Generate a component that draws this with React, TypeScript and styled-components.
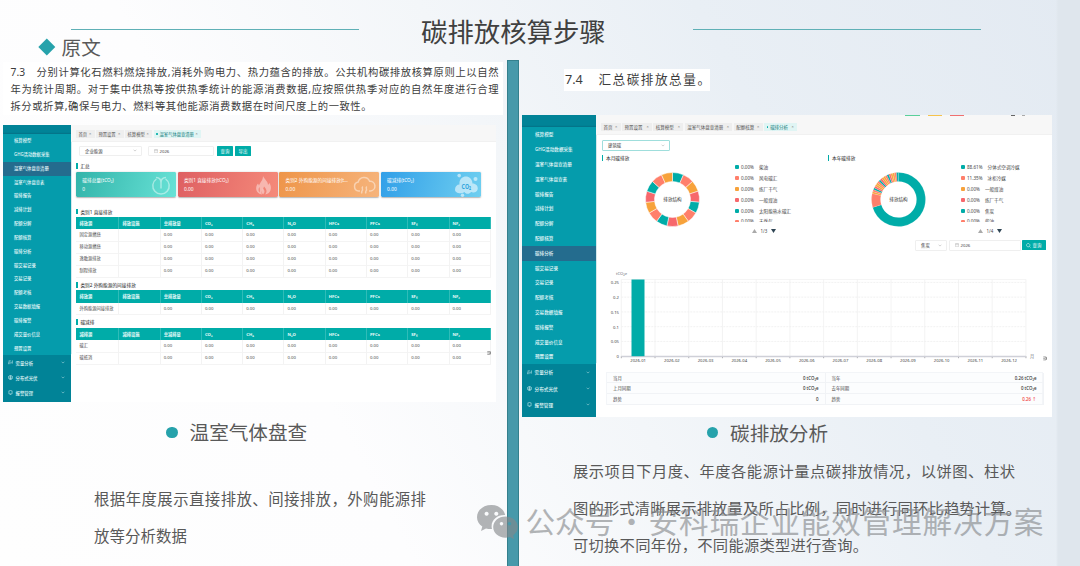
import React from 'react';
import styled, { createGlobalStyle } from 'styled-components';

const Global = createGlobalStyle`
  * { box-sizing: border-box; }
  html, body { margin: 0; padding: 0; }
  body {
    width: 1080px; height: 566px; overflow: hidden;
    font-family: "Noto Sans CJK SC", "Noto Sans", sans-serif;
    color: #595959;
  }
`;

const TEAL = '#00aca8';
const CORAL = '#ff7f6b';
const ORANGE = '#f7a23b';
const RED = '#f7686c';
const UI_FONT = '"Noto Sans", "Noto Sans CJK SC", sans-serif';

/* ---------- slide ---------- */
const Slide = styled.div`
  position: relative;
  width: 1080px; height: 566px; overflow: hidden;
  display: flex; flex-direction: column;
  background:
    linear-gradient(90deg, transparent 1056px, #dfe6ed 1058px),
    linear-gradient(62deg, #fefefe 0%, #fdfdfe 30%, #f3f6f9 52%, #e9eff5 72%, #e3eaf2 100%);
`;
const Header = styled.header`
  display: flex; align-items: flex-start; height: 38px; flex: none;
  padding-left: 71px;
`;
const Rule = styled.div`
  width: 288px; height: 1px; margin-top: 29px; background: #5fb0b6;
`;
const Title = styled.h1`
  margin: 16px 87px 0 62px; width: 185px; height: 30px; line-height: 30px;
  font-size: 26.4px; font-weight: 400; color: #404040; white-space: nowrap;
`;
const Body = styled.div`
  display: grid; grid-template-columns: 507px 12px 537px; flex: 1; min-height: 0;
`;
const Column = styled.section`
  display: flex; flex-direction: column; align-items: flex-start; min-width: 0;
`;
const Divider = styled.div`
  margin-top: 22px; background: #4799aa;
  border: 1px solid #34808d; border-bottom: 0;
`;
const SourceHead = styled.div`
  display: flex; align-items: center; height: 18px; margin-left: 41px; gap: 9px;
  font-size: 19.6px; line-height: 18px;
`;
const Diamond = styled.i`
  width: 11.6px; height: 11.6px; background: #26a2ab; transform: rotate(45deg);
`;
const Quote = styled.div<{ $w: number; $h: number; $m: string; $p: string }>`
  width: ${p => p.$w}px; height: ${p => p.$h}px; margin: ${p => p.$m}; padding: ${p => p.$p};
  background: #fff; color: #3c3c3c; font-family: ${UI_FONT};
`;
const Line = styled.div<{ $w: number; $size: number; $lh: number }>`
  width: ${p => p.$w}px; font-size: ${p => p.$size}px; line-height: ${p => p.$lh}px;
  height: ${p => p.$lh}px; white-space: nowrap; text-align: justify; text-align-last: justify;
`;
const Caption = styled.h2<{ $m: string; $gap: number }>`
  display: flex; align-items: center; gap: ${p => p.$gap}px; margin: ${p => p.$m};
  height: 24px; font-size: 19.6px; font-weight: 400; line-height: 24px; white-space: nowrap;
  color: #595959;
`;
const Dot = styled.i`
  width: 11.6px; height: 11.6px; border-radius: 50%; background: #26a2ab;
`;
const Paragraph = styled.div<{ $m: string }>`
  margin: ${p => p.$m}; color: #595959;
`;
const Watermark = styled.div`
  position: absolute; left: 476px; top: 501px; height: 42px;
  display: flex; align-items: center; opacity: .62;
  color: #85888b;
`;
const WatermarkText = styled.div`
  display: flex; margin-left: 6.5px; font-size: 29.6px; line-height: 40px; height: 42px; white-space: nowrap;
`;
const WatermarkName = styled.span` width: 89px; `;
const WatermarkDot = styled.span` width: 34px; text-align: center; `;
const WatermarkOrg = styled.span` letter-spacing: .85px; `;

/* ---------- application window ---------- */
const AppWindow = styled.div<{ $w: number; $h: number; $m: string }>`
  display: flex; width: ${p => p.$w}px; height: ${p => p.$h}px; margin: ${p => p.$m};
  background: #fff; overflow: hidden; flex: none; font-family: ${UI_FONT};
`;
const Side = styled.nav<{ $w: number; $top: number; $size: number }>`
  width: ${p => p.$w}px; flex: none; background: #018397; color: #e4f7f8;
  font-size: ${p => p.$size}px; font-weight: 500; white-space: nowrap;
  padding-top: ${p => p.$top}px;
`;
const SubMenu = styled.div`
  background: #059cac; box-shadow: 0 -1px 1px #04758a;
`;
const SubItem = styled.div<{ $h: number; $pad: number; $on?: boolean }>`
  height: ${p => p.$h}px; line-height: ${p => p.$h}px; padding-left: ${p => p.$pad}px;
  background: ${p => (p.$on ? '#246c8e' : 'transparent')};
`;
const MainItem = styled.div<{ $h: number }>`
  display: flex; align-items: center; height: ${p => p.$h}px; padding: 0 6px 0 5px;
`;
const MainLabel = styled.span` flex: 1; margin-left: 2.6px; `;

const Content = styled.div` flex: 1; min-width: 0; display: flex; flex-direction: column; `;
const Tabs = styled.div<{ $h: number; $pt: number; $pl: number }>`
  display: flex; align-items: flex-start; height: ${p => p.$h}px; flex: none;
  padding: ${p => p.$pt}px 0 0 ${p => p.$pl}px; background: #f7f7f7;
  border-bottom: 1px solid #f1f1f1;
`;
const Tab = styled.div<{ $w: number; $on?: boolean; $size: number }>`
  display: flex; align-items: center; justify-content: space-between;
  width: ${p => p.$w}px; height: 8.4px; margin-right: 1.4px; padding: 0 3.4px 0 2.4px;
  font-size: ${p => p.$size}px; line-height: 8px; white-space: nowrap;
  background: ${p => (p.$on ? '#e0f5f4' : '#eeeeee')};
  color: ${p => (p.$on ? '#157c7c' : '#555')};
`;
const TabLabel = styled.span`
  display: flex; align-items: center; gap: 2px;
  &::before { content: ''; width: 1.6px; height: 1.6px; border-radius: 50%; background: ${TEAL}; }
`;
const Close = styled.span` font-size: 4px; color: #777; `;
const Filters = styled.div<{ $m: string }>`
  display: flex; align-items: center; height: 10.5px; margin: ${p => p.$m}; flex: none;
`;
const Field = styled.div<{ $w: number; $ml?: number; $c?: string }>`
  display: flex; align-items: center; justify-content: space-between;
  width: ${p => p.$w}px; height: 10.5px; margin-left: ${p => p.$ml ?? 0}px; padding: 0 4px 0 5px;
  border: 1px solid ${p => p.$c ?? '#efefef'}; border-radius: 1px; background: #fff;
  font-size: 4.4px; line-height: 8px; color: #444;
`;
const DateValue = styled.span` flex: 1; margin-left: 2px; font-size: 4.3px; `;
const Button = styled.div<{ $w: number; $ml: number }>`
  display: flex; align-items: center; justify-content: center; gap: 2px;
  width: ${p => p.$w}px; height: 10px; margin-left: ${p => p.$ml}px; border-radius: .6px;
  background: ${TEAL}; color: #fff; font-size: 4.4px; line-height: 10px;
`;
const Section = styled.div<{ $m: string }>`
  display: flex; align-items: center; gap: 2.6px; height: 6px; margin: ${p => p.$m}; flex: none;
  font-size: 4.7px; line-height: 6px; color: #222; white-space: nowrap;
  &::before { content: ''; width: 1.4px; height: 5.8px; background: ${TEAL}; }
`;
const Cards = styled.div`
  display: flex; gap: 1.6px; margin: 2.6px 0 0 5.3px; height: 25px; flex: none;
`;
const Card = styled.div<{ $from: string; $to: string }>`
  display: flex; justify-content: space-between; width: 100px; height: 25px;
  padding: 4px 3px 0 6px; border-radius: 1.4px; color: #fff;
  background: linear-gradient(105deg, ${p => p.$from}, ${p => p.$to});
  box-shadow: 0 .6px 1.4px rgba(90, 90, 90, .45);
  font-size: 4.7px; line-height: 8px; white-space: nowrap;
`;
const CardValue = styled.div` margin-top: 1.6px; font-size: 4.9px; `;
const CardIcon = styled.svg` width: 24px; height: 24px; margin-top: -3px; flex: none; margin-left: -3px; `;

const Table = styled.div` width: 414.6px; margin-left: 5.4px; flex: none; `;
const Row = styled.div<{ $head?: boolean }>`
  display: grid; grid-template-columns: 43px repeat(9, 41.28px);
  height: ${p => (p.$head ? 12.2 : 11.9)}px; line-height: ${p => (p.$head ? 12.4 : 11.9)}px;
  font-size: 4.25px; white-space: nowrap;
  font-weight: ${p => (p.$head ? 700 : 400)};
  color: ${p => (p.$head ? '#e9fbfa' : '#4a4a4a')};
  background: ${p => (p.$head ? TEAL : '#fff')};
  & > span {
    padding-left: 3px;
    border-right: .6px solid ${p => (p.$head ? '#2fbcb8' : '#f3f3f3')};
    border-bottom: ${p => (p.$head ? '0' : '1px solid #f4f4f4')};
  }
`;
const Corner = styled.div<{ $m: string }>`
  align-self: flex-end; width: 4px; height: 4px; margin: ${p => p.$m}; flex: none; line-height: 0;
`;

const subMenu = ['核算模型', 'GHG活动数据采集', '温室气体盘查清册', '温室气体盘查表', '碳排报告', '减排计划', '配额分解', '配额核算', '碳排分析', '碳交易记录', '交易记录', '配额考核', '交易数据填报', '碳排报警', '成交量价信息', '预置设置'];
const mainMenu = ['需量分析', '分布式光伏', '报警管理'];

const Chevron = ({ color = '#b5b5b5' }: { color?: string }) => (
  <svg width="4" height="3" viewBox="0 0 4 3"><path d="M.6.7 2 2.1 3.4.7" fill="none" stroke={color} strokeWidth=".6" /></svg>
);
const Calendar = () => (
  <svg width="4" height="4" viewBox="0 0 4 4"><path d="M.3.7h3.4v3H.3zM.3 1.7h3.4M1.2.2v.8M2.8.2v.8" fill="none" stroke="#aaa" strokeWidth=".4" /></svg>
);
const cornerPath = 'M.3.4h2.6M.3 1.9h1.6M.3 3.4h2.6M3.5.4v3M2.2 1l1.100.9-1.100.9';
const MenuGlyph = ({ i }: { i: number }) => (
  <svg width="5" height="5" viewBox="0 0 5 5" fill="none" stroke="#d5f0f2" strokeWidth=".55">
    {i === 0 && <path d="M.6 2.2v2M1.9 1.4v2.8M3.2 1.8v1.6M4.4.4v3.2M.4 1.2l2.2-.6" />}
    {i === 1 && <path d="M2.5.4a2.1 2.1 0 1 0 .01 0M.5 2h4M1 3.6h3M2.5.4v4.2" />}
    {i === 2 && <path d="M.9.8h1M3.1.8h1v3.1M.9.8v3.1h3.2M1.9 4.6h1.2M1.9.4h1.2" />}
  </svg>
);

interface SidebarProps { w: number; top: number; size: number; pitch: number; pad: number; mainPitch: number; active: number }
const Sidebar = ({ w, top, size, pitch, pad, mainPitch, active }: SidebarProps) => (
  <Side $w={w} $top={top} $size={size}>
    <SubMenu>
      {subMenu.map((t, i) => <SubItem key={t} $h={pitch} $pad={pad} $on={i === active}>{t}</SubItem>)}
    </SubMenu>
    {mainMenu.map((t, i) => (
      <MainItem key={t} $h={mainPitch}><MenuGlyph i={i} /><MainLabel>{t}</MainLabel><Chevron color="#9fd5db" /></MainItem>
    ))}
  </Side>
);

const gases = ['CO₂', 'CH₄', 'N₂O', 'HFCs', 'PFCs', 'SF₆', 'NF₃'];
const EmissionTable = ({ head, rows }: { head: string[]; rows: string[] }) => (
  <Table>
    <Row $head>{[...head, ...gases].map(h => <span key={h}>{h}</span>)}</Row>
    {rows.map(r => (
      <Row key={r}><span>{r}</span><span />{Array.from({ length: 8 }, (_, i) => <span key={i}>0.00</span>)}</Row>
    ))}
  </Table>
);

const cardData = [
  { t: '碳排总量(tCO₂)', v: '0', a: '#32b4aa', b: '#68e2d6' },
  { t: '类别1 直接排放(tCO₂)', v: '0.00', a: '#de5f62', b: '#f58a7a' },
  { t: '类别2 外购能源的间接排放(t...', v: '0.00', a: '#ee9549', b: '#f6b47c' },
  { t: '碳减排(tCO₂)', v: '0.00', a: '#319fe8', b: '#6fcff0' },
];
const CardArt = ({ i }: { i: number }) => (
  <CardIcon viewBox="0 0 24 24" fill="none" stroke="#fff" strokeOpacity=".45" strokeWidth="1.5">
    {i === 0 && <path d="M7.4 6a8.200 8.200 0 1 0 9.200 0M12 15.500V10M7 4.600c3 0 5 2 5 5.400 0-3.400 2-5.400 5-5.400" />}
    {i === 1 && (
      <g fill="#fff" fillOpacity=".42" stroke="none">
        <path fillRule="evenodd" d="M12 3c1 3 5 5 5 9l1.500-2c3 5 1 11-4.500 11.500 3-3 1-6-1-8-1 4-3.500 4-2 8-6-1-7.500-7-4-11l1 2c1-3 4-5 4-9.500zM8.500 14c-1.500 2-1 4.500.3 5.600C8.600 17.300 9 16 8.500 14z" />
        <path d="M12 15.500c2 2 2 4 0 6-2-2-1.500-4 0-6z" />
      </g>
    )}
    {i === 2 && <path d="M8 18H6.600a4.500 4.500 0 0 1-.4-8.900 6 6 0 0 1 11.400-.8 4.800 4.800 0 0 1 1 9.600H17M10.800 13.500c-2 2 1.200 2.500-.8 4.500-.8 1-.4 1.800.2 2.400M14.800 13.500c-2 2 1.200 2.500-.8 4.500-.8 1-.4 1.800.2 2.400" />}
    {i === 3 && (
      <g fill="#fff" fillOpacity=".55" stroke="none">
        <path d="M5.500 11.500c-1-10 12.500-11 13-1 6.500 0 7 8.500 1.500 9-1.500.2-2-.6-3-.6-1.500 2.600-5.500 2.200-6.500 0-2.500 2-9.500 2-9.500-2.400 0-3 2-5 4.500-5z" />
        <circle cx="5.200" cy="2.600" r="1.800" /><circle cx="21.500" cy="6" r="2" /><circle cx="8.500" cy="22.300" r="1.700" />
        <text x="7.600" y="15.800" fontSize="6.500" fontWeight="700" fill="#35a5dc" fillOpacity="1" textLength="9.500" lengthAdjust="spacingAndGlyphs">CO₂</text>
      </g>
    )}
  </CardIcon>
);

const InventoryApp = () => (
  <AppWindow $w={492.5} $h={277.3} $m="9.700px 0 0 3px">
    <Sidebar w={68} top={9.4} size={4.35} pitch={13.83} pad={11} mainPitch={15} active={2} />
    <Content>
      <Tabs $h={17} $pt={5} $pl={5}>
        <Tab $w={18.6} $size={4.3}>首页<Close>×</Close></Tab>
        <Tab $w={27.8} $size={4.3}>预置设置<Close>×</Close></Tab>
        <Tab $w={27} $size={4.3}>核算模型<Close>×</Close></Tab>
        <Tab $w={47.500} $size={4.3} $on><TabLabel>温室气体盘查清册</TabLabel><Close>×</Close></Tab>
      </Tabs>
      <Filters $m="4px 0 0 8px">
        <Field $w={63}>企业能源<Chevron /></Field>
        <Field $w={66} $ml={5.5}><Calendar /><DateValue>2026</DateValue></Field>
        <Button $w={16} $ml={3.500}>查询</Button>
        <Button $w={16} $ml={2}>导出</Button>
      </Filters>
      <Section $m="7px 0 0 5.400px">汇总</Section>
      <Cards>
        {cardData.map((c, i) => (
          <Card key={c.t} $from={c.a} $to={c.b}><div>{c.t}<CardValue>{c.v}</CardValue></div><CardArt i={i} /></Card>
        ))}
      </Cards>
      <Section $m="11.800px 0 2.700px 5.400px">类别1 直接排放</Section>
      <EmissionTable head={['排放源', '排放设施', '总排放量']} rows={['固定源燃烧', '移动源燃烧', '逸散源排放', '制程排放']} />
      <Section $m="4.700px 0 2.700px 5.400px">类别2 外购能源的间接排放</Section>
      <EmissionTable head={['排放源', '排放设施', '总排放量']} rows={['外购能源间接排放']} />
      <Section $m="4.700px 0 2.700px 5.400px">碳减排</Section>
      <EmissionTable head={['减排源', '减排设施', '总减排量']} rows={['碳汇', '碳抵消']} />
      <Corner $m="-15px 5px 0 0">
        <svg width="4" height="4" viewBox="0 0 4 4"><path d={cornerPath} fill="none" stroke="#555" strokeWidth=".55" /></svg>
      </Corner>
    </Content>
  </AppWindow>
);

/* ---------- analysis window ---------- */
const TopMarks = styled.div`
  display: flex; height: 1.300px; flex: none; padding-left: 309px; background: #f7f7f7;
`;
const Mark = styled.i<{ $w: number; $c: string; $mr: number }>`
  width: ${p => p.$w}px; margin-right: ${p => p.$mr}px; background: ${p => p.$c};
`;
const PieRow = styled.div` display: grid; grid-template-columns: 226px 1fr; height: 81.500px; flex: none; margin-top: 4px; `;
const PiePanel = styled.div` display: flex; flex-direction: column; `;
const PieBody = styled.div<{ $ml: number }>` display: flex; margin-left: ${p => p.$ml}px; `;
const PieWrap = styled.div` margin-top: 11.400px; height: 55px; flex: none; & > svg { display: block; } `;
const LegendBox = styled.div<{ $ml: number }>` margin: 1.300px 0 0 ${p => p.$ml}px; width: 70px; `;
const LegendList = styled.div` height: 60.500px; overflow: hidden; `;
const LegendItem = styled.div<{ $c: string }>`
  display: flex; align-items: center; height: 10.900px; font-size: 4.6px; line-height: 10.900px;
  color: #444; white-space: nowrap;
  &::before { content: ''; width: 4px; height: 4px; margin-right: 2px; border-radius: 1px; background: ${p => p.$c}; }
`;
const LegendName = styled.span` margin-left: 5px; `;
const Pager = styled.div`
  display: flex; align-items: center; gap: 3.500px; height: 6px; margin: 5.500px 0 0 17px;
  font-size: 4.4px; line-height: 6px; color: #444;
`;
const ChartWrap = styled.div` height: 101px; margin-top: 15.500px; flex: none; & > svg { display: block; } `;
const Summary = styled.div`
  display: grid; grid-template-columns: 218.500px 218px; margin: 4.600px 0 0 10px; width: 436.500px;
  border: 1px solid #f3f5f8; border-bottom: 0; flex: none; background: #fcfdfe;
`;
const SummaryCell = styled.div<{ $red?: boolean }>`
  display: flex; justify-content: space-between; height: 10.700px; padding: 0 6px;
  border-bottom: 1px solid #f1f3f6; border-right: 1px solid #f1f3f6;
  font-size: 4.4px; line-height: 10.700px; color: #444;
  & > b { font-weight: 500; color: ${p => (p.$red ? '#f03434' : '#333')}; }
`;

const arc = (a0: number, a1: number) => {
  const p = (r: number, a: number) => {
    const t = ((a - 90) * Math.PI) / 180;
    return `${(27.5 + r * Math.cos(t)).toFixed(2)} ${(27.5 + r * Math.sin(t)).toFixed(2)}`;
  };
  const big = a1 - a0 > 180 ? 1 : 0;
  return `M${p(27, a0)}A27 27 0 ${big} 1 ${p(27, a1)}L${p(18, a1)}A18 18 0 ${big} 0 ${p(18, a0)}Z`;
};
interface Slice { a: number; b: number; c: string }
const palette = [TEAL, CORAL, ORANGE, RED];
const monthSlices: Slice[] = Array.from({ length: 15 }, (_, i) => ({ a: i * 24, b: i * 24 + 24, c: palette[i % 4] }));
const yearSlices: Slice[] = [
  { a: 0, b: 253, c: TEAL },
  { a: 253, b: 283, c: CORAL },
  ...Array.from({ length: 18 }, (_, i) => ({
    a: 283 + i * 4.28, b: 283 + (i + 1) * 4.28,
    c: i === 17 ? TEAL : [ORANGE, CORAL, TEAL, RED, ORANGE][i % 5],
  })),
];
const PieChart = ({ slices, line }: { slices: Slice[]; line: number }) => (
  <PieWrap>
    <svg width="55" height="55" viewBox="0 0 55 55">
      {slices.map(s => <path key={s.a} d={arc(s.a, s.b)} fill={s.c} stroke="#fff" strokeWidth={line} />)}
      <text x="27.500" y="29.200" fontSize="4.600" textAnchor="middle" fill="#333">排放结构</text>
    </svg>
  </PieWrap>
);

interface LegendEntry { v: string; n: string }
const monthLegend: LegendEntry[] = ['柴油', '风电碳汇', '炼厂干气', '一般煤油', '太阳能热水碳汇', '天然气'].map(n => ({ v: '0.00%', n }));
const yearLegend: LegendEntry[] = [
  { v: '88.61%', n: '分体式空调冷媒' }, { v: '11.35%', n: '冰柜冷媒' },
  ...['一般煤油', '炼厂干气', '焦炭', '柴油'].map(n => ({ v: '0.00%', n })),
];
const legendColors = [TEAL, CORAL, ORANGE, RED, TEAL, CORAL];
const Legend = ({ items, page, ml }: { items: LegendEntry[]; page: string; ml: number }) => (
  <LegendBox $ml={ml}>
    <LegendList>
      {items.map((l, i) => <LegendItem key={l.n} $c={legendColors[i]}>{l.v}<LegendName>{l.n}</LegendName></LegendItem>)}
    </LegendList>
    <Pager>
      <svg width="5" height="4" viewBox="0 0 5 4"><path d="M2.500 0 5 4H0z" fill="#aaa" /></svg>
      {page}
      <svg width="5" height="4" viewBox="0 0 5 4"><path d="M0 0h5L2.500 4z" fill="#2f4554" /></svg>
    </Pager>
  </LegendBox>
);

const BarChart = () => {
  const x0 = 25.3, step = 33.72, base = 90.2;
  const ticks = [0, 0.05, 0.1, 0.15, 0.2, 0.25];
  return (
    <svg width="456" height="101" viewBox="0 0 456 101" fontSize="4.200" fill="#444">
      <text x="20" y="8.800" fill="#6e7079">tCO₂e</text>
      <path d={`M${x0} 13.500H${x0 + step * 12}`} stroke="#f0f0f0" strokeWidth=".7" />
      {ticks.map((t, i) => (
        <g key={t}>
          {i > 0 && <path d={`M${x0} ${base - i * 14.76}h${step * 12}`} stroke="#ededed" strokeWidth=".7" strokeDasharray="2 1" />}
          <text x="23" y={base - i * 14.76 + 1.9} textAnchor="end">{t}</text>
        </g>
      ))}
      {Array.from({ length: 13 }, (_, i) => (
        <g key={i}>
          <path d={`M${x0 + i * step} 13.500V${base}`} stroke="#f0f0f0" strokeWidth=".8" />
          <path d={`M${x0 + i * step} ${base}v2`} stroke="#6e7079" strokeWidth=".6" />
          {i < 12 && <text x={x0 + (i + .5) * step} y="96.400" textAnchor="middle">{`2026-${String(i + 1).padStart(2, '0')}`}</text>}
        </g>
      ))}
      <path d={`M${x0} ${base + .3}h${step * 12}`} stroke="#cfd0d8" strokeWidth="1.400" />
      <rect x={35.500} y={13.500} width={13} height={base - 13.500} fill={TEAL} />
      <text x="434" y="92.200" fill="#6e7079">月</text>
      <path transform="translate(447 90.500)" d={cornerPath} fill="none" stroke="#555" strokeWidth=".55" />
    </svg>
  );
};

const summary: [string, string, boolean?][] = [
  ['当月', '0 tCO₂e'], ['当年', '0.26 tCO₂e'],
  ['上月同期', '0 tCO₂e'], ['去年同期', '0 tCO₂e'],
  ['趋势', '0'], ['趋势', '0.26 ↑', true],
];

const AnalysisApp = () => (
  <AppWindow $w={529.6} $h={301.4} $m="24.700px 0 0 3px">
    <Sidebar w={74} top={12.200} size={4.6} pitch={14.8} pad={13} mainPitch={16.3} active={8} />
    <Content>
      <TopMarks>
        <Mark $w={15} $c="#5ad09a" $mr={7.500} /><Mark $w={14.500} $c="#f6c34c" $mr={8} />
        <Mark $w={14} $c="#f0706f" $mr={47} /><Mark $w={4} $c="#666" $mr={6.500} /><Mark $w={3} $c="#aaa" $mr={0} />
      </TopMarks>
      <Tabs $h={19} $pt={6.200} $pl={5}>
        <Tab $w={19.700} $size={4.5}>首页<Close>×</Close></Tab>
        <Tab $w={30} $size={4.5}>预置设置<Close>×</Close></Tab>
        <Tab $w={30} $size={4.5}>核算模型<Close>×</Close></Tab>
        <Tab $w={47.500} $size={4.5}>温室气体盘查清册<Close>×</Close></Tab>
        <Tab $w={29} $size={4.5}>配额核算<Close>×</Close></Tab>
        <Tab $w={33} $size={4.5} $on><TabLabel>碳排分析</TabLabel><Close>×</Close></Tab>
      </Tabs>
      <Filters $m="4.700px 0 0 6px"><Field $w={67.500} $c="#9fdedc">建筑碳<Chevron /></Field></Filters>
      <PieRow>
        <PiePanel>
          <Section $m="0 0 0 6px">本月碳排放</Section>
          <PieBody $ml={48.500}>
            <PieChart slices={monthSlices} line={0.5} />
            <Legend items={monthLegend} page="1/3" ml={35.500} />
          </PieBody>
        </PiePanel>
        <PiePanel>
          <Section $m="0 0 0 6px">本年碳排放</Section>
          <PieBody $ml={48.800}>
            <PieChart slices={yearSlices} line={0.15} />
            <Legend items={yearLegend} page="1/4" ml={35.200} />
          </PieBody>
        </PiePanel>
      </PieRow>
      <Filters $m="4px 0 0 319px">
        <Field $w={32}>焦炭<Chevron /></Field>
        <Field $w={72} $ml={1.500}><Calendar /><DateValue>2026</DateValue></Field>
        <Button $w={24} $ml={1}>
          <svg width="5" height="5" viewBox="0 0 5 5"><path d="M2.200.5a1.700 1.700 0 1 0 .01 0M3.400 3.400l1.200 1.200" fill="none" stroke="#fff" strokeWidth=".5" /></svg>
          查询
        </Button>
      </Filters>
      <ChartWrap><BarChart /></ChartWrap>
      <Summary>
        {summary.map(([k, v, red], i) => <SummaryCell key={i} $red={red}>{k}<b>{v}</b></SummaryCell>)}
      </Summary>
    </Content>
  </AppWindow>
);

const WechatLogo = () => (
  <svg width="43" height="36" viewBox="0 0 43 36">
    <path fill="currentColor" fillRule="evenodd" d="M15.500 1C7 1 1 6.500 1 13.200c0 4 2 7 5.300 9.300L5 27l5-2.600c2 .6 3.800.8 6 .7-2.200-8 5-14.600 13.200-14C27.700 5 22.300 1 15.500 1zM10.600 7.700a2 2 0 1 1-.01 0zM20.300 7.700a2 2 0 1 1-.01 0z" />
    <path fill="currentColor" fillRule="evenodd" d="M29.500 12.500c-7 0-12.300 4.700-12.300 10.600s5.300 10.700 12.300 10.700c1.600 0 3-.3 4.400-.7l4.300 2.200-1.100-3.900c2.900-2 4.700-5 4.700-8.300 0-5.900-5.400-10.600-12.300-10.600zM25.500 18a1.700 1.700 0 1 1-.01 0zM33.500 18a1.700 1.700 0 1 1-.01 0z" />
  </svg>
);

export default function App() {
  return (
    <>
      <Global />
      <Slide>
        <Header><Rule /><Title>碳排放核算步骤</Title><Rule /></Header>
        <Body>
          <Column>
            <SourceHead><Diamond />原文</SourceHead>
            <Quote $w={500} $h={53} $m="6px 0 0 3px" $p="2px 0 0 7.500px">
              <Line $w={488} $size={10.3} $lh={16.8}>7.3　分别计算化石燃料燃烧排放,消耗外购电力、热力蕴含的排放。公共机构碳排放核算原则上以自然</Line>
              <Line $w={488} $size={10.3} $lh={16.8}>年为统计周期。对于集中供热等按供热季统计的能源消费数据,应按照供热季对应的自然年度进行合理</Line>
              <Line $w={361} $size={10.3} $lh={16.8}>拆分或折算,确保与电力、燃料等其他能源消费数据在时间尺度上的一致性。</Line>
            </Quote>
            <InventoryApp />
            <Caption $m="18.500px 0 0 166px" $gap={12}><Dot />温室气体盘查</Caption>
            <Paragraph $m="36px 0 0 94px">
              <Line $w={332} $size={15.4} $lh={36.6}>根据年度展示直接排放、间接排放，外购能源排</Line>
              <Line $w={93} $size={15.4} $lh={36.6}>放等分析数据</Line>
            </Paragraph>
          </Column>
          <Divider />
          <Column>
            <Quote $w={146} $h={21.5} $m="31px 0 0 45px" $p="0 0 0 1px">
              <Line $w={145} $size={12.6} $lh={21}>7.4　汇总碳排放总量。</Line>
            </Quote>
            <AnalysisApp />
            <Caption $m="4px 0 0 187.500px" $gap={12}><Dot />碳排放分析</Caption>
            <Paragraph $m="7.500px 0 0 54px">
              <Line $w={442} $size={15.3} $lh={36.8}>展示项目下月度、年度各能源计量点碳排放情况，以饼图、柱状</Line>
              <Line $w={448} $size={15.3} $lh={36.8}>图的形式清晰展示排放量及所占比例，同时进行同环比趋势计算。</Line>
              <Line $w={295} $size={15.3} $lh={36.8}>可切换不同年份，不同能源类型进行查询。</Line>
            </Paragraph>
          </Column>
        </Body>
        <Watermark>
          <WechatLogo />
          <WatermarkText>
            <WatermarkName>公众号</WatermarkName><WatermarkDot>·</WatermarkDot><WatermarkOrg>安科瑞企业能效管理解决方案</WatermarkOrg>
          </WatermarkText>
        </Watermark>
      </Slide>
    </>
  );
}
